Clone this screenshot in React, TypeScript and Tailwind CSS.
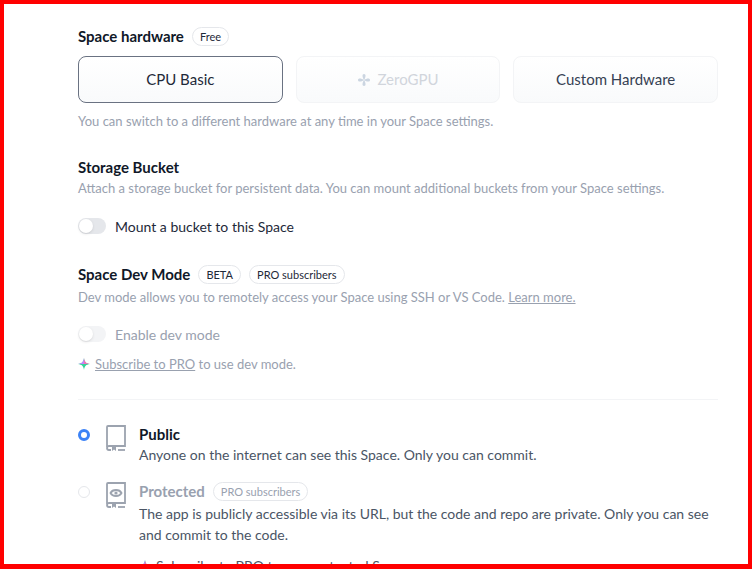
import React from "react";

const Sparkle = () => (
  <svg width="12" height="12" viewBox="0 0 12 12" className="shrink-0">
    <path d="M6 0 C6.6 4 8 5.4 12 6 C8 6.6 6.6 8 6 12 C5.4 8 4 6.6 0 6 C4 5.4 5.4 4 6 0Z" fill="#34d399" />
    <path d="M6 0 C6.6 4 8 5.4 12 6 L6 6Z" fill="#f472b6" />
    <path d="M0 6 C4 5.4 5.4 4 6 0 L6 6Z" fill="#c084fc" />
  </svg>
);

const Toggle = ({ faded }: { faded?: boolean }) => (
  <div className={`w-[28px] h-[16px] rounded-full ${faded ? "bg-gray-100" : "bg-gray-200"} relative shrink-0`}>
    <div className="absolute left-[1px] top-[1px] w-[14px] h-[14px] rounded-full bg-white shadow-sm" />
  </div>
);

const Badge = ({ children, faded }: { children: React.ReactNode; faded?: boolean }) => (
  <span className={`text-[11px] leading-none px-[7px] py-[3px] rounded-full border border-gray-200 ${faded ? "text-gray-400" : "text-gray-800"} font-normal`}>{children}</span>
);

const Book = ({ eye }: { eye?: boolean }) => (
  <svg width="24" height="30" viewBox="0 0 24 28" fill="none" stroke="#9ca3af" strokeWidth="1.8" className="shrink-0">
    <path d="M3 23 V3 a1 1 0 0 1 1-1 H21 V22 H5 a2 2 0 0 0 -2 2 a2 2 0 0 0 2 2 H7" />
    <path d="M14 26 H21" />
    <path d="M8 22 V27 L10 25.5 L12 27 V22" fill="#9ca3af" stroke="none" />
    {eye && (
      <>
        <path d="M6.5 12 C8.5 8 15.5 8 17.5 12 C15.5 16 8.5 16 6.5 12Z" />
        <circle cx="12" cy="12" r="1.6" fill="#9ca3af" stroke="none" />
      </>
    )}
  </svg>
);

export default function App() {
  return (
    <div className="w-[752px] h-[569px] border-[4px] border-[#ff0000] border-b-[5px] bg-white overflow-hidden" style={{ fontFamily: '"Source Sans Pro", "Lato", sans-serif' }}>
      <div className="ml-[74px] w-[640px] pt-[20px]">
        <div className="flex items-center gap-[8px] h-[24px]">
          <span className="text-[15px] font-bold text-gray-900">Space hardware</span>
          <Badge>Free</Badge>
        </div>
        <div className="grid grid-cols-3 gap-[13px] mt-[8px]">
          <div className="h-[47px] rounded-lg border-[1.5px] border-gray-500 bg-gradient-to-b from-white to-gray-50 flex items-center justify-center text-[15px] text-gray-800">CPU Basic</div>
          <div className="h-[47px] rounded-lg border border-gray-100 bg-gradient-to-b from-white to-gray-50 flex items-center justify-center gap-[6px] text-[15px] text-gray-300">
            <svg width="14" height="14" viewBox="0 0 14 14" fill="#cbd5e1">
              <path d="M7 7 C5 4 5 1 7 1 C9 1 9 4 7 7Z" />
              <path d="M7 7 C10 5 13 5 13 7 C13 9 10 9 7 7Z" />
              <path d="M7 7 C9 10 9 13 7 13 C5 13 5 10 7 7Z" />
              <path d="M7 7 C4 9 1 9 1 7 C1 5 4 5 7 7Z" />
            </svg>
            ZeroGPU
          </div>
          <div className="h-[47px] rounded-lg border border-gray-100 bg-gradient-to-b from-white to-gray-50 flex items-center justify-center text-[15px] text-gray-700">Custom Hardware</div>
        </div>
        <p className="text-[13px] text-gray-400 mt-[9px]">You can switch to a different hardware at any time in your Space settings.</p>

        <div className="mt-[24px] text-[15px] font-bold text-gray-900 leading-[22px]">Storage Bucket</div>
        <p className="text-[13px] text-gray-400 leading-[20px]">Attach a storage bucket for persistent data. You can mount additional buckets from your Space settings.</p>
        <div className="flex items-center gap-[9px] mt-[18px]">
          <Toggle />
          <span className="text-[14px] text-gray-800">Mount a bucket to this Space</span>
        </div>

        <div className="flex items-center gap-[8px] mt-[26px] h-[24px]">
          <span className="text-[15px] font-bold text-gray-900">Space Dev Mode</span>
          <Badge>BETA</Badge>
          <Badge>PRO subscribers</Badge>
        </div>
        <p className="text-[13px] text-gray-400 leading-[20px]">Dev mode allows you to remotely access your Space using SSH or VS Code. <span className="underline">Learn more.</span></p>
        <div className="flex items-center gap-[9px] mt-[17px]">
          <Toggle faded />
          <span className="text-[14px] text-gray-400">Enable dev mode</span>
        </div>
        <div className="flex items-center gap-[5px] mt-[10px] text-[13px] text-gray-400">
          <Sparkle />
          <span><span className="underline">Subscribe to PRO</span> to use dev mode.</span>
        </div>

        <div className="border-t border-gray-100 mt-[25px]" />

        <div className="flex mt-[23px]">
          <div className="w-[26px] pt-[6px]">
            <div className="w-[12px] h-[12px] rounded-full border-[3.5px] border-[#3b82f6] bg-white" />
          </div>
          <Book />
          <div className="ml-[11px]">
            <div className="text-[15px] font-bold text-gray-900 leading-[22px]">Public</div>
            <div className="text-[14px] text-gray-600 leading-[20px]">Anyone on the internet can see this Space. Only you can commit.</div>
          </div>
        </div>

        <div className="flex mt-[15px]">
          <div className="w-[26px] pt-[6px]">
            <div className="w-[12px] h-[12px] rounded-full border border-gray-200 bg-white" />
          </div>
          <Book eye />
          <div className="ml-[11px]">
            <div className="flex items-center gap-[8px] h-[22px]">
              <span className="text-[15px] font-bold text-gray-400">Protected</span>
              <Badge faded>PRO subscribers</Badge>
            </div>
            <div className="text-[14px] text-gray-600 leading-[21px] w-[570px] mt-[1px]">The app is publicly accessible via its URL, but the code and repo are private. Only you can see and commit to the code.</div>
            <div className="flex items-center gap-[5px] mt-[10px] text-[14px] text-gray-600">
              <Sparkle />
              <span><span className="underline">Subscribe to PRO</span> to use protected Spaces.</span>
            </div>
          </div>
        </div>
      </div>
    </div>
  );
}
